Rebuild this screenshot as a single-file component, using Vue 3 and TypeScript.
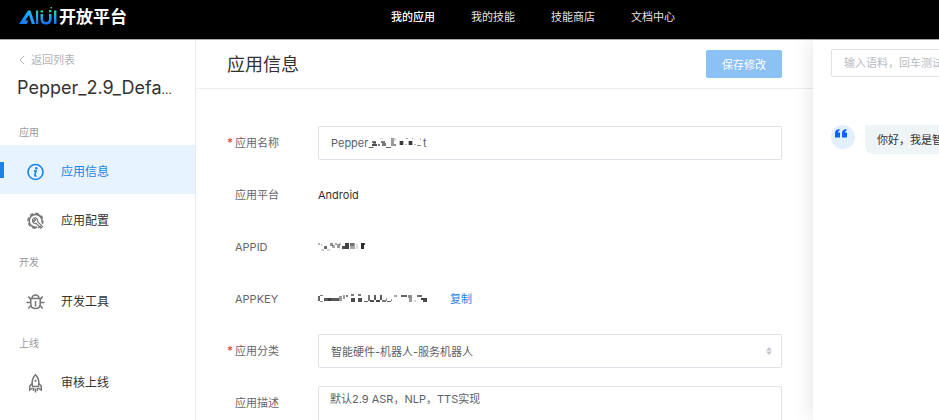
<script setup lang="ts">
import { ref } from 'vue'

interface NavItem { label: string; icon: string; active?: boolean }
interface NavGroup { title: string; items: NavItem[] }
type Block = [x: number, y: number, w: number, h: number, opacity: number]

const topLinks: string[] = ['我的应用', '我的技能', '技能商店', '文档中心']
const groups: NavGroup[] = [
  { title: '应用', items: [{ label: '应用信息', icon: 'info', active: true }, { label: '应用配置', icon: 'gear' }] },
  { title: '开发', items: [{ label: '开发工具', icon: 'bug' }] },
  { title: '上线', items: [{ label: '审核上线', icon: 'rocket' }] },
]

const name = ref('Pepper_')
const category = ref('智能硬件-机器人-服务机器人')
const description = ref('默认2.9 ASR，NLP，TTS实现')
const phrase = ref('')

// Mosaic blocks that hide the private part of each value.
const nameMask: Block[] = [
  [1, 4, 4, 2, 0.6], [2, 5, 3, 2, 0.5], [1, 7, 5, 2, 0.8], [7, 7, 2, 2, 0.6], [9, 1, 3, 1, 0.15],
  [10, 4, 4, 2, 0.6], [11, 6, 4, 3, 0.6], [15, 10, 5, 1, 0.7], [20, 1, 3, 8, 0.45], [23, 7, 2, 2, 0.5],
  [23, 1, 2, 3, 0.15], [29, 4, 3, 4, 0.85], [28, 4, 5, 4, 0.3], [35, 1, 2, 1, 0.4], [34, 7, 2, 1, 0.3],
  [38, 4, 3, 4, 0.85], [37, 4, 5, 4, 0.3], [41, 1, 1, 1, 0.4], [43, 7, 2, 1, 0.3], [46, 8, 4, 1, 0.5], [49, 1, 1, 2, 0.3],
]
const idMask: Block[] = [
  [0, 1, 2, 2, 0.35], [3, 2, 1, 2, 0.3], [3, 7, 3, 2, 0.2], [6, 4, 3, 3, 0.65], [9, 7, 3, 2, 0.2],
  [12, 1, 3, 3, 0.5], [14, 3, 3, 3, 0.4], [17, 1, 2, 2, 0.4], [19, 2, 3, 4, 0.45], [21, 1, 2, 2, 0.3],
  [24, 4, 3, 3, 0.8], [27, 1, 4, 6, 0.85], [32, 1, 5, 6, 0.4], [32, 1, 4, 3, 0.4], [38, 2, 2, 5, 0.15],
  [43, 1, 3, 6, 0.95], [45, 1, 2, 2, 0.8],
]
const keyMask: Block[] = [
  [0, 2, 2, 5, 0.7], [2, 1, 3, 1, 0.6], [2, 7, 3, 1, 0.5], [6, 4, 15, 3, 0.75], [10, 4, 3, 3, 0.5],
  [21, 2, 3, 5, 0.45], [25, 1, 2, 4, 0.45], [28, 1, 2, 2, 0.6], [33, 0, 3, 2, 0.6], [33, 4, 4, 4, 0.8],
  [40, 0, 3, 2, 0.6], [40, 4, 4, 4, 0.8], [46, 7, 4, 1, 0.7], [50, 1, 2, 6, 0.6], [52, 6, 4, 2, 0.8],
  [56, 1, 2, 5, 0.75], [58, 6, 4, 2, 0.85], [62, 1, 2, 5, 0.75], [64, 6, 4, 2, 0.6], [68, 4, 1, 3, 0.5],
  [69, 7, 4, 1, 0.7], [73, 5, 1, 2, 0.5], [76, 1, 3, 2, 0.4], [83, 1, 6, 2, 0.7], [90, 1, 4, 3, 0.5], [91, 4, 3, 4, 0.45],
  [96, 6, 2, 2, 0.2], [99, 1, 5, 2, 0.65], [103, 4, 6, 2, 0.85], [105, 6, 4, 2, 0.8],
]
</script>

<template>
  <div class="page">
    <header class="topbar">
      <a class="brand" href="#" aria-label="AIUI 开放平台">
        <svg class="logo" viewBox="0 0 39 20" width="39" height="20" aria-hidden="true">
          <defs>
            <linearGradient id="logoA" x1="0" y1="1" x2="1" y2="0"><stop offset="0" stop-color="#126dff" /><stop offset="1" stop-color="#21c9f5" /></linearGradient>
            <linearGradient id="logoU" x1="0" y1="0" x2="0" y2="1"><stop offset="0" stop-color="#18d9bd" /><stop offset=".5" stop-color="#16a7ef" /><stop offset="1" stop-color="#1767ff" /></linearGradient>
          </defs>
          <path d="M0 18 9 4.500h2.500L16 18h-3.200L10 9 6.300 14.500H9.500L7.500 18Z" fill="url(#logoA)" />
          <path d="M17 4.500h2.200V18H17ZM21.500 8H24v5q0 3 3 3t3-3V8h2.500v5q0 5.500-5.500 5.500T21.500 13ZM35 4.500h2.400V18H35Z" fill="url(#logoU)" />
          <path d="M21.500 4.500H24v2h-2.500ZM30 4h2.300v2.300H30ZM31.500 1H33v1.500h-1.500Z" fill="#1bd6a2" />
        </svg>
        <span class="brand-name">开放平台</span>
      </a>
      <nav class="top-nav">
        <a v-for="(link, i) in topLinks" :key="link" href="#" :class="{ current: i === 0 }">{{ link }}</a>
      </nav>
    </header>

    <div class="body">
      <aside class="sidebar">
        <a class="back" href="#">
          <svg viewBox="0 0 6 10" width="6" height="10" aria-hidden="true"><path d="M5 1 1 5l4 4" fill="none" stroke="currentColor" /></svg>
          <span>返回列表</span>
        </a>
        <h2 class="app-name">Pepper_2.9_Defa<span class="more">…</span></h2>
        <nav class="side-nav">
          <section v-for="group in groups" :key="group.title">
            <h3>{{ group.title }}</h3>
            <a v-for="item in group.items" :key="item.label" class="side-link" :class="{ active: item.active }" href="#">
              <svg class="icon" viewBox="0 0 20 20" width="20" height="20" fill="none" stroke="currentColor" stroke-width="1.5" aria-hidden="true">
                <template v-if="item.icon === 'info'">
                  <circle cx="10.500" cy="10" r="7.500" stroke-width="1.600" />
                  <circle cx="11.300" cy="6.300" r="1.200" fill="currentColor" stroke="none" />
                  <path d="M9 8.900h1.900l-1 4.300q-.2 1.100 1.500.5" stroke-width="1.700" />
                </template>
                <template v-else-if="item.icon === 'gear'">
                  <circle cx="10.500" cy="9.800" r="7.400" stroke-width="1.600" stroke-dasharray="3.200 2.600" pathLength="46.400" />
                  <path d="M17 11.200A6.500 6.500 0 1 0 12 16.200" stroke-width="1.700" />
                  <path d="M8.800 7.300 10.600 9 9.300 10.300 7.600 8.500Q7.100 11 8.900 12.200q1.100.6 2.200.2L15.900 17.200 17.500 15.600 12.700 10.800Q13.300 8.500 11.700 7.400 10.300 6.600 8.800 7.300Z" stroke-width="1.200" />
                </template>
                <template v-else-if="item.icon === 'bug'">
                  <path d="M7 6Q7.500 3 10.500 3T14 6M5.800 6.500h9.400v5.500q0 4.500-4.700 4.500T5.800 12ZM10.500 9v5.500" stroke-width="1.500" />
                  <path d="M5.500 7.300 3.300 4.500M15.500 7.300l2.200-2.800M5.500 10.500h-4M15.500 10.500h4M6 13.500l-2.700 3M15 13.500l2.700 3" stroke-width="1.500" />
                </template>
                <template v-else>
                  <path d="M7.500 13.500Q6 6 10.500 1.700q4.500 4.300 3 11.800Z" stroke-width="1.500" />
                  <circle cx="10.500" cy="7.800" r="1.100" fill="currentColor" stroke="none" />
                  <path d="M7 10.500 4.700 13.300V17l2.900-2M14 10.500l2.300 2.800V17l-2.900-2M8.500 15v3M10.500 15.500V19.500M12.500 15v3" stroke-width="1.500" />
                </template>
              </svg>
              <span>{{ item.label }}</span>
            </a>
          </section>
        </nav>
      </aside>

      <main class="content">
        <div class="content-head">
          <h1>应用信息</h1>
          <button class="save" type="submit" form="app-form">保存修改</button>
        </div>
        <form id="app-form" class="form" @submit.prevent>
          <div class="row">
            <label class="label required" for="name">应用名称</label>
            <div class="field control">
              <input id="name" v-model="name" class="box" type="text" />
              <span class="name-tail">
                <svg class="mask" viewBox="0 0 52 12" width="52" height="12" aria-hidden="true">
                  <rect v-for="(b, i) in nameMask" :key="i" :x="b[0]" :y="b[1]" :width="b[2]" :height="b[3]" :opacity="b[4]" />
                </svg>t
              </span>
            </div>
          </div>
          <div class="row">
            <span class="label">应用平台</span>
            <span class="field">Android</span>
          </div>
          <div class="row">
            <span class="label">APPID</span>
            <span class="field masked">
              <svg class="mask" viewBox="0 0 48 10" width="48" height="10" aria-hidden="true">
                <rect v-for="(b, i) in idMask" :key="i" :x="b[0]" :y="b[1]" :width="b[2]" :height="b[3]" :opacity="b[4]" />
              </svg>
            </span>
          </div>
          <div class="row">
            <span class="label">APPKEY</span>
            <span class="field masked">
              <svg class="mask" viewBox="0 0 110 10" width="110" height="10" aria-hidden="true">
                <rect v-for="(b, i) in keyMask" :key="i" :x="b[0]" :y="b[1]" :width="b[2]" :height="b[3]" :opacity="b[4]" />
              </svg>
              <button class="copy" type="button">复制</button>
            </span>
          </div>
          <div class="row">
            <label class="label required" for="category">应用分类</label>
            <div class="field control">
              <select id="category" v-model="category" class="box">
                <option>智能硬件-机器人-服务机器人</option>
              </select>
              <svg class="caret" viewBox="0 0 6 8" width="6" height="8" aria-hidden="true"><path d="M0 3.500 3 0l3 3.500ZM0 4.500h6L3 8Z" fill="#c3c7ce" /></svg>
            </div>
          </div>
          <div class="row">
            <label class="label" for="description">应用描述</label>
            <div class="field control">
              <textarea id="description" v-model="description" class="box area"></textarea>
            </div>
          </div>
        </form>
      </main>

      <aside class="tester">
        <input v-model="phrase" class="phrase" type="text" placeholder="输入语料，回车测试效果" aria-label="输入语料，回车测试效果" />
        <div class="message">
          <span class="avatar">
            <svg viewBox="0 0 12 9" width="12" height="9" aria-hidden="true"><path d="M4.500 0v1.500Q3 2 3 3.500h2V8q0 .500-.500.500h-4Q0 8.500 0 8V4Q0 .500 4.500 0ZM11.500 0v1.500Q10 2 10 3.500h2V8q0 .500-.500.500h-4Q7 8.500 7 8V4Q7 .500 11.500 0Z" fill="#0b63ff" /></svg>
          </span>
          <p class="bubble">你好，我是智能助手</p>
        </div>
      </aside>
    </div>
  </div>
</template>

<style>
body { margin: 0; }
</style>

<style scoped>
* { box-sizing: border-box; }
.page {
  display: flex;
  flex-direction: column;
  height: 100vh;
  overflow: hidden;
  background: #fff;
  color: #333;
  font: 11px/16px Inter, "Noto Sans CJK SC", sans-serif;
}
a { color: inherit; text-decoration: none; }
h1, h2, h3, p { margin: 0; font-weight: 400; }
button, input, select, textarea { font: inherit; color: inherit; }

.topbar {
  display: flex;
  flex: none;
  align-items: flex-start;
  height: 40px;
  padding: 6px 19px 0;
  background: #000;
  border-bottom: 1px solid #aaa;
  color: #e4e4e4;
}
.brand { display: flex; flex: 0 0 372px; gap: 1px; color: #fff; }
.brand-name { font-size: 17px; line-height: 22px; font-weight: 700; }
.top-nav { display: flex; gap: 36px; padding-top: 3px; }
.top-nav .current { color: #fff; font-weight: 500; }

.body { display: flex; flex: 1; min-height: 0; }
.sidebar {
  flex: 0 0 196px;
  border-right: 1px solid #eaeaea;
}
.back { display: flex; align-items: center; gap: 6px; padding: 12px 19px 0; color: #b0b3b8; }
.app-name {
  padding: 8px 0 0 17px;
  white-space: nowrap;
  font-size: 18px;
  line-height: 24px;
}
.more { font-size: 12px; }
.side-nav { padding-top: 22px; }
.side-nav h3 { padding: 0 19px 5px; font-size: 10px; line-height: 16px; color: #999; }
.side-nav section + section h3 { padding-top: 11px; }
.side-link {
  display: flex;
  align-items: center;
  gap: 16px;
  height: 49px;
  padding: 4px 0 0 25px;
  font-size: 12px;
}
.side-link .icon { color: #777; }
.side-link.active {
  background: linear-gradient(#1784e9, #1784e9) left center / 4px 16px no-repeat, #e7f3fe;
  color: #1784e9;
}
.side-link.active .icon { color: #1784e9; }

.content { flex: 1; min-width: 0; }
.content-head {
  display: flex;
  align-items: center;
  justify-content: space-between;
  height: 49px;
  padding: 0 31px;
  border-bottom: 1px solid #eee;
}
.content-head h1 { padding-top: 2px; font-size: 18px; line-height: 26px; }
.save {
  width: 76px;
  height: 28px;
  padding: 1px 0 0;
  border: 0;
  border-radius: 2px;
  background: #8bc1f4;
  color: #fff;
}
.form { display: grid; gap: 18px; padding: 37px 31px 0; }
.row { display: flex; align-items: flex-start; line-height: 34px; }
.label { position: relative; flex: 0 0 91px; padding-left: 8px; color: #666; }
.required::before { content: "*"; position: absolute; left: 0; color: #f33; font-size: 12px; }
.field { flex: 1; min-width: 0; height: 34px; }
.control { position: relative; color: #5c5f66; }
.box {
  display: block;
  width: 100%;
  height: 34px;
  padding: 0 12px;
  border: 1px solid #dfe2e8;
  border-radius: 2px;
  background: #fff;
  appearance: none;
  outline: none;
}
.area { height: 80px; padding: 4px 11px; line-height: 17px; resize: none; }
.mask { fill: #222; }
.name-tail { position: absolute; top: 0; left: 53px; display: flex; align-items: center; height: 34px; }
.masked { display: flex; align-items: center; gap: 22px; }
.copy { padding: 0; border: 0; background: none; color: #1784e9; }
.caret { position: absolute; top: 13px; right: 10px; }

.tester {
  flex: 0 0 126px;
  padding: 9px 0 0 18px;
  overflow: hidden;
  background: #fff;
  box-shadow: 0 0 20px rgba(0, 0, 0, .12);
}
.phrase {
  display: block;
  width: 180px;
  height: 28px;
  padding: 0 12px;
  border: 1px solid #dfe2e8;
  border-radius: 2px;
  outline: none;
}
.phrase::placeholder { color: #b8bcc4; opacity: 1; }
.message { display: flex; gap: 10px; width: 240px; padding-top: 48px; }
.avatar { flex: none; width: 24px; height: 24px; padding: 4px; border-radius: 50%; background: #e2effc; line-height: 8px; }
.bubble { padding: 7px 12px 6px; border-radius: 2px 8px 8px 8px; background: #eff4f7; white-space: nowrap; }
</style>
